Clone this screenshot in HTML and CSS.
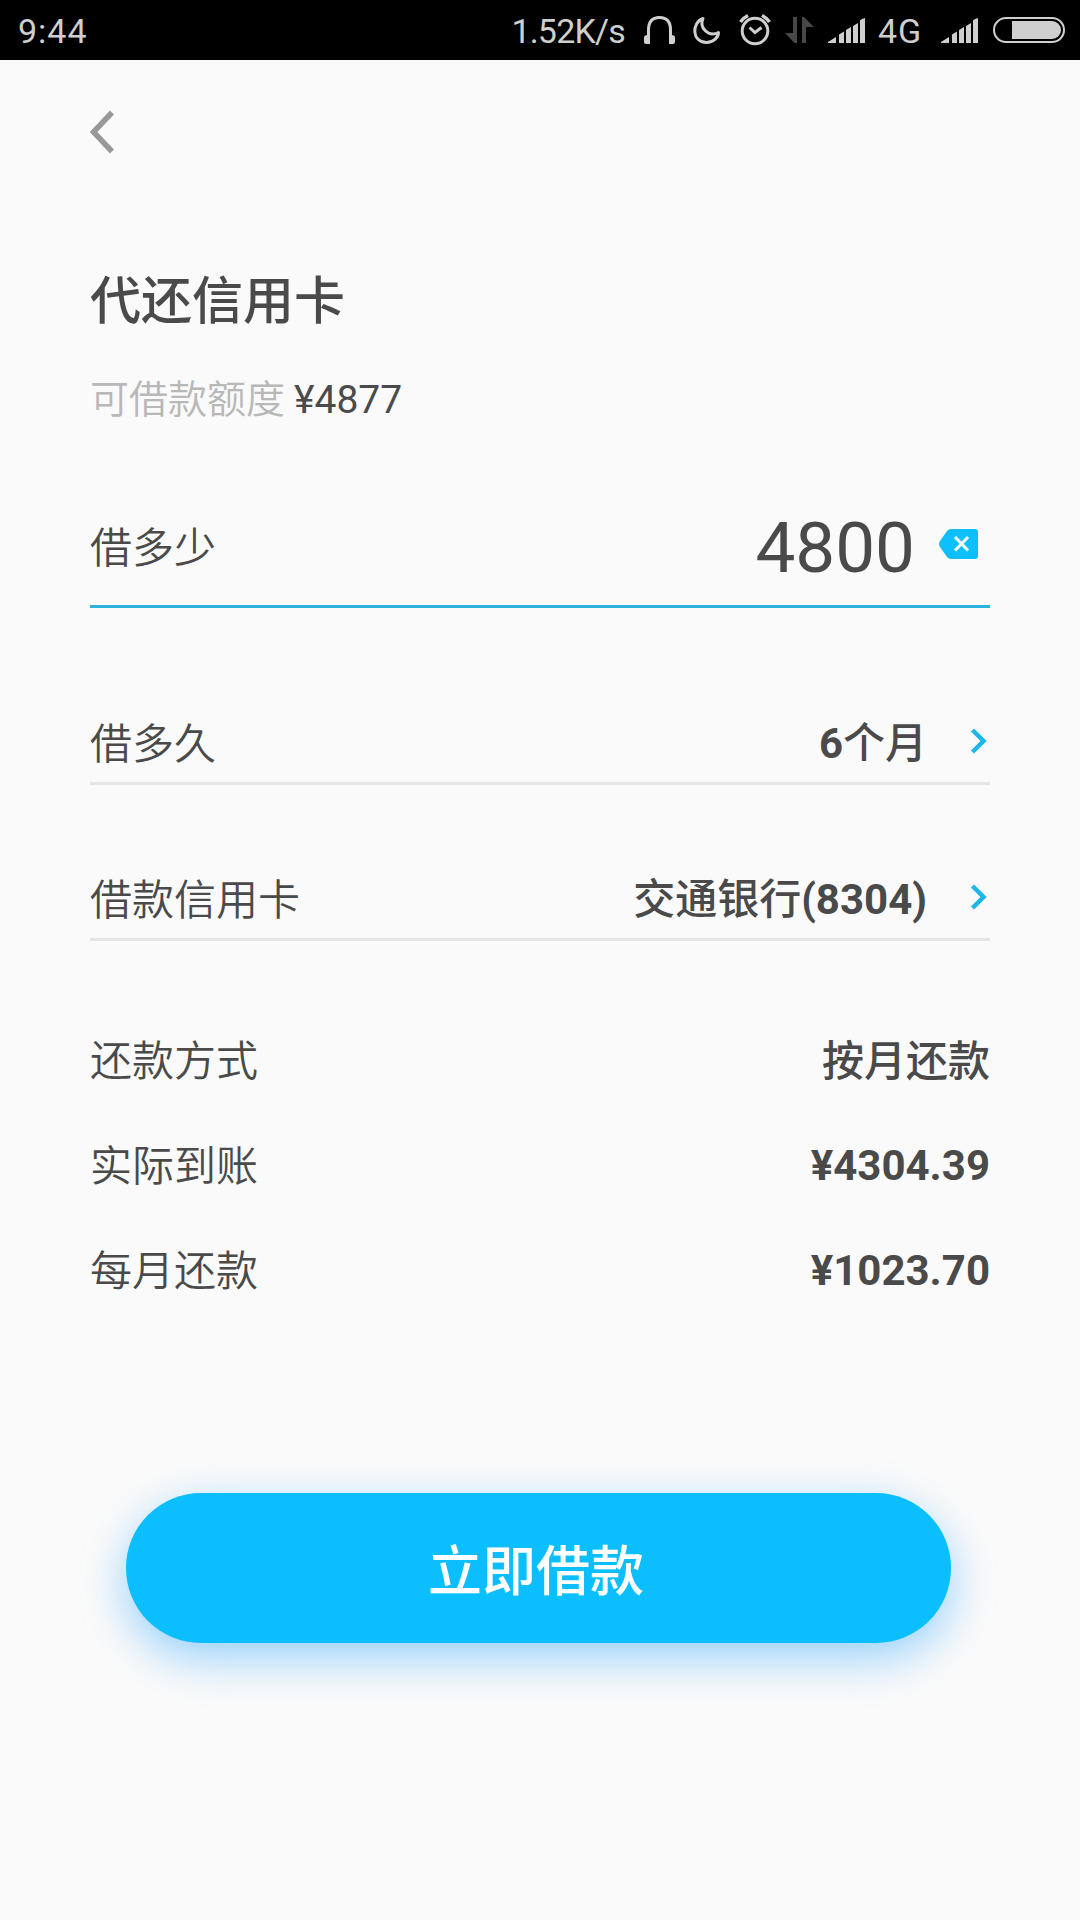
FILE: index.html
```html
<!DOCTYPE html>
<html lang="zh-CN">
<head>
<meta charset="utf-8">
<title>代还信用卡</title>
<link rel="stylesheet" href="styles.css">
</head>
<body>
<header class="status">
  <span class="time">9:44</span>
  <div class="indicators">
    <span class="speed">1.52K/s</span>
    <svg width="36" height="60" viewBox="642 0 36 60"><path d="M648.500 36V30Q648.500 17.500 659.500 17.500T670.500 30V36" fill="none" stroke="currentColor" stroke-width="3"/><path d="M647 34h3v10h-4q-2 0-2-2v-5q0-1.500 3-2zM672 34h-3v10h4q2 0 2-2v-5q0-1.500-3-2z"/></svg>
    <svg width="33" height="60" viewBox="690 0 33 60"><path d="M703 18.500C691.500 22.500 691.500 42.500 706.500 42.500C713 42.500 718.500 37.500 718.500 32.500C708 37.500 699 27.500 703 18.500Z" fill="none" stroke="currentColor" stroke-width="3" stroke-linejoin="round"/></svg>
    <svg width="38" height="60" viewBox="735 0 38 60"><g fill="none" stroke="currentColor" stroke-width="3"><circle cx="755" cy="31" r="12.800"/><path d="M749.500 27.500l5.500 5 6.500-5" /><path d="M740.500 22q2.500-4 7.500-6.500M769.500 22q-2.500-4-7.500-6.500" stroke-width="3.500"/></g></svg>
    <svg class="dim" width="30" height="60" viewBox="785 0 30 60"><path d="M793 17h4v26h-2.500L785 33h8zM802 17h2l10 10h-8v16h-4z"/></svg>
    <svg width="39" height="60" viewBox="827 0 39 60"><path d="M828 43v-1l8-5v6zM839 34.500l5-3V43h-5zM846 30l5-3V43h-5zM853 26l5-3V43h-5zM860 20.500q0-1 5-2.500V43h-5z"/></svg>
    <span class="network">4G</span>
    <svg width="39" height="60" viewBox="940 0 39 60"><path d="M941 43v-1l8-5v6zM952 34.500l5-3V43h-5zM959 30l5-3V43h-5zM966 26l5-3V43h-5zM973 20.500q0-1 5-2.500V43h-5z"/></svg>
    <svg width="76" height="60" viewBox="991 0 76 60"><rect x="994" y="18" width="70" height="24" rx="12" fill="none" stroke="currentColor" stroke-width="2"/><path d="M1012 21h40a9 9 0 0 1 0 18h-40z"/></svg>
  </div>
</header>
<main class="page">
  <svg class="back" width="30" height="44" viewBox="0 0 30 44"><path d="M22 2.500L3.500 22L22 41.500" fill="none" stroke="currentColor" stroke-width="5.500"/></svg>
  <h1 class="title">代还信用卡</h1>
  <p class="quota"><span class="quota-label">可借款额度</span><span class="quota-amount">¥4877</span></p>

  <div class="field amount">
    <span class="label">借多少</span>
    <span class="amount-value">4800</span>
    <svg class="clear" width="40" height="30" viewBox="0 0 40 30"><path d="M12 0H36Q39 0 39 3V27Q39 30 36 30H12Q10 30 8 28L1 18Q-1 15 1 12L8 2Q10 0 12 0Z"/><path d="M16 8L29 21.500M29 8L16 21.500" stroke="#fff" stroke-width="3"/></svg>
  </div>
  <div class="field">
    <span class="label">借多久</span>
    <span class="value">6<span class="han">个月</span></span>
    <svg class="chevron" width="20" height="26" viewBox="0 0 20 26"><path d="M2.500 2L13.500 13L2.500 24" fill="none" stroke="currentColor" stroke-width="4.500"/></svg>
  </div>
  <div class="field card">
    <span class="label">借款信用卡</span>
    <span class="value"><span class="han">交通银行</span>(8304)</span>
    <svg class="chevron" width="20" height="26" viewBox="0 0 20 26"><path d="M2.500 2L13.500 13L2.500 24" fill="none" stroke="currentColor" stroke-width="4.500"/></svg>
  </div>

  <div class="summary">
    <div class="line"><span class="label">还款方式</span><span class="value han">按月还款</span></div>
    <div class="line"><span class="label">实际到账</span><span class="value">¥4304.39</span></div>
    <div class="line"><span class="label">每月还款</span><span class="value">¥1023.70</span></div>
  </div>
  <button class="submit" type="button">立即借款</button>
</main>
</body>
</html>
```
FILE: styles.css
```css
* { box-sizing: border-box; }
body {
  margin: 0;
  min-height: 1920px;
  background: #fafafa;
  color: #4a4a4a;
  font-family: Roboto, "Noto Sans CJK SC", sans-serif;
}
svg { display: block; flex: none; fill: currentColor; }
.status {
  display: flex;
  justify-content: space-between;
  height: 60px;
  padding: 0 13px 0 18px;
  background: #000;
  color: #cfcfcf;
  font-size: 34px;
  line-height: 62px;
}
.time { letter-spacing: 1px; }
.indicators { display: flex; gap: 12px; }
.speed { margin-right: 5px; letter-spacing: -.8px; }
.network { width: 50px; letter-spacing: 1px; }
.dim { color: #484848; }
.page {
  display: flex;
  flex-direction: column;
  padding: 50px 90px 0;
  font-size: 42px;
}
.back { color: #999; }
.title {
  margin: 118px 0 0;
  font-size: 51px;
  font-weight: 500;
  line-height: 60px;
}
.quota {
  display: flex;
  gap: 9px;
  height: 40px;
  margin: 48px 0 0;
  font-size: 39px;
  line-height: 40px;
}
.quota-label { color: #b8b8b8; font-weight: 350; }
.field {
  display: flex;
  align-items: center;
  height: 79px;
  border-bottom: 3px solid #e6e6e6;
  line-height: 60px;
}
.label { font-weight: 350; }
.field .label { margin-right: auto; padding-top: 2px; }
.field.amount {
  height: 117px;
  margin: 71px 0 98px;
  border-color: #2bb3dd;
}
.amount-value { font-size: 71px; }
.clear { margin: 0 11px 8px 24px; color: #0dbfff; }
.card { margin-top: 77px; }
.value { font-weight: 700; }
.han { font-weight: 500; }
.chevron { margin: 0 0 6px 43px; color: #1fb6ea; }
.summary {
  display: flex;
  flex-direction: column;
  gap: 45px;
  margin-top: 90px;
}
.line {
  display: flex;
  justify-content: space-between;
  height: 60px;
  line-height: 60px;
}
.line .label, .line .han { padding-top: 1px; }
.submit {
  width: 825px;
  height: 150px;
  margin: 192px 0 0 36px;
  padding: 0 5px 2px 0;
  border: 0;
  border-radius: 75px;
  background: #0bbfff;
  box-shadow: 0 15px 45px rgba(30, 160, 255, .45);
  color: #fff;
  font: 500 54px Roboto, "Noto Sans CJK SC", sans-serif;
}
```
